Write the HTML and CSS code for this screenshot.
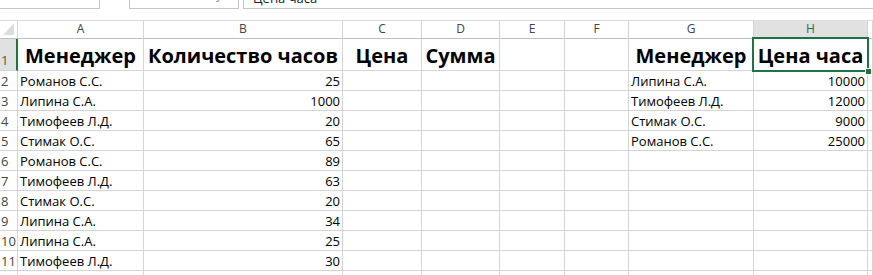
FILE: index.html
```html
<!DOCTYPE html>
<html lang="ru">
<head>
<meta charset="utf-8">
<title>Лист</title>
<link rel="stylesheet" href="styles.css">
</head>
<body>
<div class="formula-bar">
  <div class="namebox">H1</div>
  <div class="grip">⋮</div>
  <div class="fx-box"><span class="ico">✕</span><span class="ico">✓</span><span class="ico fx">fx</span></div>
  <div class="formula">Цена часа</div>
</div>
<div class="sheet">
  <div class="corner"><svg width="13" height="14" viewBox="0 0 13 14"><polygon points="12,1 12,13 1,13" fill="#dcdcdc"/></svg></div>
  <div class="ch">A</div><div class="ch">B</div><div class="ch">C</div><div class="ch">D</div><div class="ch">E</div><div class="ch">F</div><div class="ch">G</div><div class="ch active">H</div><div class="ch"></div>

  <div class="rh active">1</div>
  <div class="c b">Менеджер</div><div class="c b">Количество часов</div><div class="c b">Цена</div><div class="c b">Сумма</div><div class="c"></div><div class="c"></div><div class="c b">Менеджер</div><div class="c b sel">Цена часа</div><div class="c"></div>

  <div class="rh">2</div>
  <div class="c">Романов С.С.</div><div class="c n">25</div><div class="c"></div><div class="c"></div><div class="c"></div><div class="c"></div><div class="c">Липина С.А.</div><div class="c n">10000</div><div class="c"></div>

  <div class="rh">3</div>
  <div class="c">Липина С.А.</div><div class="c n">1000</div><div class="c"></div><div class="c"></div><div class="c"></div><div class="c"></div><div class="c">Тимофеев Л.Д.</div><div class="c n">12000</div><div class="c"></div>

  <div class="rh">4</div>
  <div class="c">Тимофеев Л.Д.</div><div class="c n">20</div><div class="c"></div><div class="c"></div><div class="c"></div><div class="c"></div><div class="c">Стимак О.С.</div><div class="c n">9000</div><div class="c"></div>

  <div class="rh">5</div>
  <div class="c">Стимак О.С.</div><div class="c n">65</div><div class="c"></div><div class="c"></div><div class="c"></div><div class="c"></div><div class="c">Романов С.С.</div><div class="c n">25000</div><div class="c"></div>

  <div class="rh">6</div>
  <div class="c">Романов С.С.</div><div class="c n">89</div><div class="c"></div><div class="c"></div><div class="c"></div><div class="c"></div><div class="c"></div><div class="c"></div><div class="c"></div>

  <div class="rh">7</div>
  <div class="c">Тимофеев Л.Д.</div><div class="c n">63</div><div class="c"></div><div class="c"></div><div class="c"></div><div class="c"></div><div class="c"></div><div class="c"></div><div class="c"></div>

  <div class="rh">8</div>
  <div class="c">Стимак О.С.</div><div class="c n">20</div><div class="c"></div><div class="c"></div><div class="c"></div><div class="c"></div><div class="c"></div><div class="c"></div><div class="c"></div>

  <div class="rh">9</div>
  <div class="c">Липина С.А.</div><div class="c n">34</div><div class="c"></div><div class="c"></div><div class="c"></div><div class="c"></div><div class="c"></div><div class="c"></div><div class="c"></div>

  <div class="rh">10</div>
  <div class="c">Липина С.А.</div><div class="c n">25</div><div class="c"></div><div class="c"></div><div class="c"></div><div class="c"></div><div class="c"></div><div class="c"></div><div class="c"></div>

  <div class="rh">11</div>
  <div class="c">Тимофеев Л.Д.</div><div class="c n">30</div><div class="c"></div><div class="c"></div><div class="c"></div><div class="c"></div><div class="c"></div><div class="c"></div><div class="c"></div>

  <div class="rh">12</div>
  <div class="c"></div><div class="c"></div><div class="c"></div><div class="c"></div><div class="c"></div><div class="c"></div><div class="c"></div><div class="c"></div><div class="c"></div>
</div>
</body>
</html>
```

FILE: styles.css
```css
html, body {
  margin: 0;
  height: 275px;
  overflow: hidden;
  background: #fff;
}
body {
  font-family: "Open Sans", "DejaVu Sans", sans-serif;
  font-size: 13px;
  color: #000;
}

/* formula bar (cropped at top) */
.formula-bar {
  display: flex;
  height: 20px;
  overflow: hidden;
  align-items: flex-start;
}
.namebox {
  box-sizing: border-box;
  width: 100px;
  height: 23px;
  margin-top: -14px;
  padding: 1px 0 0 4px;
  line-height: 17px;
  border-right: 1px solid #c6c6c6;
  border-bottom: 1px solid #c6c6c6;
  color: #222;
}
.grip {
  width: 29px;
  margin-top: -14px;
  padding-left: 10px;
  box-sizing: border-box;
  line-height: 17px;
  color: #9a9a9a;
}
.fx-box {
  box-sizing: border-box;
  width: 110px;
  height: 23px;
  margin-top: -14px;
  border: 1px solid #c6c6c6;
  border-top: none;
  display: flex;
  gap: 8px;
  padding: 0 0 0 10px;
  line-height: 17px;
  color: #c8c8c8;
}
.ico.fx {
  margin-left: auto;
  margin-right: 10px;
  font-style: italic;
  color: #8a8a8a;
}
.formula {
  flex: 1;
  box-sizing: border-box;
  height: 23px;
  margin-top: -14px;
  margin-left: 4px;
  padding: 4px 0 0 9px;
  line-height: 17px;
  border-left: 1px solid #c6c6c6;
  border-bottom: 1px solid #c6c6c6;
  color: #222;
}

/* sheet grid */
.sheet {
  display: grid;
  grid-template-columns: 18px 126px 199px 79px 78px 65px 64px 125px 114px 1fr;
  grid-template-rows: 18px 32px repeat(11, 20px);
  border-top: 1px solid #dadada;
}
.sheet > div {
  box-sizing: border-box;
  border-right: 1px solid #d4d4d4;
  border-bottom: 1px solid #d4d4d4;
  white-space: nowrap;
  display: flex;
  align-items: flex-end;
  min-width: 0;
}
.corner {
  justify-content: flex-end;
  align-items: flex-end;
  padding: 0 2px 2px 0;
  border-bottom-color: #c0c0c0 !important;
}
.corner svg {
  display: block;
}
.ch {
  justify-content: center;
  font-size: 12px;
  line-height: 16px;
  padding-bottom: 1px;
  color: #444;
  border-bottom-color: #c0c0c0 !important;
}
.ch.active {
  background: #e1e1e1;
  color: #217346;
}
.rh {
  padding: 0 0 0 1px;
  line-height: 17px;
  color: #444;
  overflow: visible;
}
.rh.active {
  background: #e1e1e1;
  color: #217346;
  border-right: 2px solid #217346 !important;
  padding-bottom: 1px;
}
.c {
  padding: 0 2px 0 2px;
  line-height: 17px;
  overflow: visible;
}
.c.n {
  justify-content: flex-end;
}
.c.b {
  justify-content: center;
  font-weight: 700;
  font-size: 20px;
  line-height: 25px;
  padding-bottom: 2px;
}
.c.sel {
  position: relative;
}
.c.sel::after {
  content: "";
  position: absolute;
  left: -2px;
  top: -2px;
  right: -2px;
  bottom: -2px;
  border: 2px solid #217346;
  z-index: 2;
}
.c.sel::before {
  content: "";
  position: absolute;
  right: -5px;
  bottom: -5px;
  width: 5px;
  height: 5px;
  background: #217346;
  border: 1px solid #fff;
  z-index: 3;
}
```
